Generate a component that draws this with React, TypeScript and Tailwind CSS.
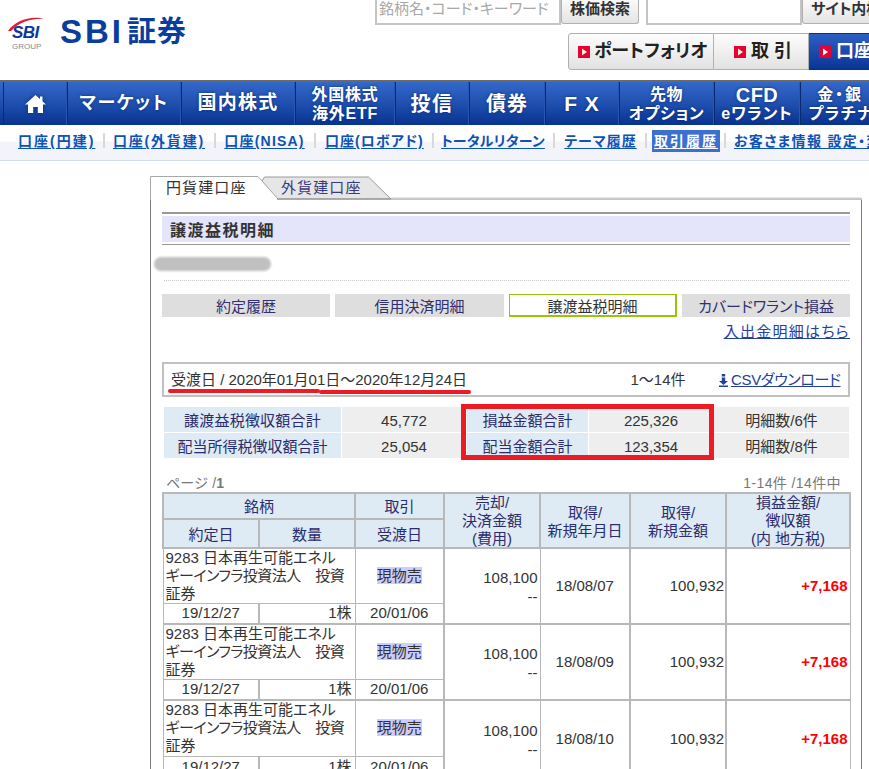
import React from "react";

const font = "[font-family:'Liberation_Sans','Noto_Sans_CJK_JP',sans-serif]";

function Play({ dark }: { dark?: boolean }) {
  return (
    <svg width="12" height="12" viewBox="0 0 12 12" className="shrink-0">
      <rect width="12" height="12" fill="#e60033" />
      <path d="M4 2.5 L9 6 L4 9.5 Z" fill={dark ? "#fff" : "#fff3d0"} />
    </svg>
  );
}

function Logo() {
  return (
    <div className="flex items-start pl-[8px] pt-[16px] h-full">
      <div className="relative w-[40px] h-[36px]">
        <svg width="40" height="22" viewBox="0 0 40 22" className="absolute left-0 top-0">
          <path d="M0 15 C7 4 24 -1 37 3 C26 2 12 5 3 15 Z" fill="#e8192c" />
        </svg>
        <div className="absolute left-[4px] top-[8px] text-[17px] leading-[17px] font-bold italic text-[#0b3a94] tracking-[-0.5px]">SBI</div>
        <div className="absolute left-[4px] top-[26px] text-[8px] leading-[9px] text-[#8a8a8a]">GROUP</div>
      </div>
      <div className="ml-[12px] flex items-center h-[32px] font-bold text-[#0b3d9c] whitespace-nowrap">
        <span className="text-[33px] leading-[32px] tracking-[3px]">SBI</span>
        <span className="ml-[3px] text-[29px] leading-[32px] tracking-[1px]">証券</span>
      </div>
    </div>
  );
}

function HeaderRight() {
  return (
    <div className="flex flex-col w-[494px] shrink-0">
      <div className="flex h-[24px] w-[520px]">
        <div className="w-[186px] shrink-0 h-[25px] border-2 border-t-0 border-[#c4c4c4] bg-white text-[#a8a8a8] text-[15px] leading-[17px] pl-[2px] whitespace-nowrap overflow-hidden">銘柄名・コード・キーワード</div>
        <div className="w-[78px] shrink-0 h-[24px] rounded-b-[3px] border border-t-0 border-[#b0b0b0] bg-gradient-to-b from-[#fafafa] to-[#e4e4e4] text-[15px] leading-[18px] font-bold text-[#333] text-center">株価検索</div>
        <div className="w-[156px] shrink-0 h-[25px] ml-[7px] border-2 border-t-0 border-[#c4c4c4] bg-white" />
        <div className="w-[90px] shrink-0 h-[24px] rounded-b-[3px] border border-t-0 border-[#b0b0b0] bg-gradient-to-b from-[#fafafa] to-[#e4e4e4] text-[15px] leading-[18px] font-bold text-[#333] pl-[8px] whitespace-nowrap">サイト内検索</div>
      </div>
      <div className="flex h-[37px] mt-[9px] ml-[193px] w-[345px]">
        <div className="w-[146px] shrink-0 h-[37px] flex items-center pl-[9px] gap-[4px] rounded-l-[3px] border border-[#b0b0b0] bg-gradient-to-b from-[#fdfdfd] to-[#e2e2e2] text-[18px] font-bold text-[#222] whitespace-nowrap"><Play />ポートフォリオ</div>
        <div className="w-[95px] shrink-0 h-[37px] flex items-center pl-[20px] gap-[5px] border border-l-0 border-[#b0b0b0] bg-gradient-to-b from-[#fdfdfd] to-[#e2e2e2] text-[18px] font-bold text-[#222] whitespace-nowrap"><Play />取 引</div>
        <div className="w-[100px] shrink-0 h-[37px] flex items-center pl-[10px] gap-[5px] border border-l-0 border-[#0a2f86] bg-gradient-to-b from-[#2d5fc4] to-[#0a3596] text-[18px] font-bold text-white whitespace-nowrap"><Play dark />口座管理</div>
      </div>
    </div>
  );
}

const navItems: { w: string; lines: { t: string; c?: string }[]; size: string }[] = [
  { w: "w-[114px]", lines: [{ t: "マーケット" }], size: "text-[18px] tracking-[1.5px]" },
  { w: "w-[114px]", lines: [{ t: "国内株式" }], size: "text-[19px] tracking-[1.2px]" },
  { w: "w-[100px]", lines: [{ t: "外国株式" }, { t: "海外ETF" }], size: "text-[16px] leading-[19px] tracking-[0.8px]" },
  { w: "w-[74px]", lines: [{ t: "投信" }], size: "text-[20px] tracking-[1.5px]" },
  { w: "w-[76px]", lines: [{ t: "債券" }], size: "text-[20px] tracking-[1px]" },
  { w: "w-[74px]", lines: [{ t: "F X" }], size: "text-[21px] tracking-[1px]" },
  { w: "w-[95px]", lines: [{ t: "先物" }, { t: "オプション" }], size: "text-[16px] leading-[19px] tracking-[0.6px]" },
  { w: "w-[86px]", lines: [{ t: "CFD", c: "text-[20px] leading-[20px] tracking-[0.5px]" }, { t: "eワラント" }], size: "text-[16px] leading-[18px] tracking-[1px]" },
  { w: "w-[80px]", lines: [{ t: "金・銀", c: "tracking-[1.8px]" }, { t: "プラチナ", c: "pl-[2px] tracking-[1.5px]" }], size: "text-[16px] leading-[19px] tracking-[0.6px]" },
];

function NavCell({ children, w, size }: { children: React.ReactNode; w: string; size: string }) {
  return (
    <div className={`${w} ${size} shrink-0 h-full flex flex-col items-center justify-center border-l border-l-[#0a2a70] border-r border-r-[#2a55b0] font-bold text-white text-center whitespace-nowrap [text-shadow:0_0_3px_#0a2a70]`}>
      {children}
    </div>
  );
}

function Nav() {
  return (
    <div className="flex h-[45px] w-[869px] overflow-hidden border-t-2 border-t-[#6a6a6a] bg-gradient-to-b from-[#3468c8] via-[#1f50b0] to-[#08328f]">
      <div className="w-[3px] shrink-0" />
      <NavCell w="w-[64px]" size="">
        <svg width="21" height="18" viewBox="0 0 21 18" className="drop-shadow-[0_0_2px_#0a2a70]">
          <path d="M10.5 0 L15 4 L15 1.5 L17.5 1.5 L17.5 6.3 L21 9.5 L18 9.5 L18 18 L12.8 18 L12.8 12 L8.2 12 L8.2 18 L3 18 L3 9.5 L0 9.5 Z" fill="#fff" />
        </svg>
      </NavCell>
      {navItems.map((n) => (
        <NavCell key={n.lines[0].t} w={n.w} size={n.size}>
          {n.lines.map((l) => (
            <div key={l.t} className={l.c}>{l.t}</div>
          ))}
        </NavCell>
      ))}
    </div>
  );
}

const subItems: { label: string; cls: string; active?: boolean }[] = [
  { label: "口座(円建)", cls: "w-[76px] tracking-[2px]" },
  { label: "口座(外貨建)", cls: "w-[91px] tracking-[1.8px]" },
  { label: "口座(NISA)", cls: "w-[81px] tracking-[1.2px]" },
  { label: "口座(ロボアド)", cls: "w-[98px] tracking-[1px]" },
  { label: "トータルリターン", cls: "w-[104px] tracking-[0.2px]" },
  { label: "テーマ履歴", cls: "w-[73px] tracking-[1px]" },
  { label: "取引履歴", cls: "w-[68px] tracking-[2px]", active: true },
  { label: "お客さま情報 設定・変更", cls: "w-[170px] tracking-[1.3px] text-left" },
];

const seps = ["", "ml-[9px] mr-[8px]", "ml-[10px] mr-[8px]", "ml-[9px] mr-[9px]", "ml-[9px] mr-[7px]", "ml-[8px] mr-[9px]", "ml-[8px] mr-[5px]", "ml-[4px] mr-[8px]"];

function SubNav() {
  return (
    <div className="flex items-start h-[36px] pt-[5px] pl-[18px] w-[869px] overflow-hidden border-b border-b-[#cfdcf0] bg-gradient-to-b from-white from-[45%] to-[#f2f4fa] to-[50%]">
      {subItems.map((s, i) => (
        <React.Fragment key={s.label}>
          {i > 0 && <div className={`${seps[i]} w-[2px] h-[15px] mt-[3px] bg-[#d8d8d8] shrink-0`} />}
          <div
            className={`${s.cls} shrink-0 h-[22px] text-[14px] leading-[22px] font-bold whitespace-nowrap text-center underline underline-offset-2 ${
              s.active ? "bg-[#3b6fd0] text-white" : "text-[#0d52b5]"
            }`}
          >
            {s.label}
          </div>
        </React.Fragment>
      ))}
    </div>
  );
}

function TabStrip() {
  return (
    <div className="relative h-[24px] w-[712px]">
      <svg width="712" height="24" viewBox="0 0 712 24" className="absolute left-0 top-0">
        <path d="M114.5 1 L218.5 1 L241 23 L127 23 L112 5 Z" fill="#e6e6e6" stroke="#9a9a9a" />
        <path d="M0.5 24 L0.5 0.5 L108 0.5 L128 23" fill="#fff" stroke="#a8a8a8" />
        <path d="M127 23 L712 23" stroke="#8c8c8c" strokeWidth="1" />
        <path d="M241 22 L711 22" stroke="#cfcfcf" strokeWidth="1" />
      </svg>
      <div className="relative flex h-[23px] text-[15px] leading-[24px]">
        <div className="w-[113px] pl-[16px] text-[#333] tracking-[1.1px]">円貨建口座</div>
        <div className="pl-[18px] text-[#3a3a80] tracking-[1.1px]">外貨建口座</div>
      </div>
    </div>
  );
}

const blue = "h-[25px] bg-[#deeaf4] text-[#2c2c6c] text-center";
const gray = "h-[25px] bg-[#eeeeee] text-[#333] text-center";

function Summary() {
  return (
    <div className="relative ml-[2px] mt-[10px] w-[685px] grid grid-cols-[177px_124px_121px_124px_135px] gap-x-[1px] gap-y-[1px] text-[15px] leading-[27px]">
      <div className={`${blue} tracking-[0.2px]`}>譲渡益税徴収額合計</div>
      <div className={gray}>45,772</div>
      <div className={blue}>損益金額合計</div>
      <div className={gray}>225,326</div>
      <div className={gray}>明細数/6件</div>
      <div className={blue}>配当所得税徴収額合計</div>
      <div className={gray}>25,054</div>
      <div className={blue}>配当金額合計</div>
      <div className={gray}>123,354</div>
      <div className={gray}>明細数/8件</div>
      <div className="absolute left-[297px] top-[-3px] w-[253px] h-[56px] border-[5px] border-[#ed1c24]" />
    </div>
  );
}

const th = "border-2 border-[#b8b8b8] bg-[#deeaf4] text-[#2c2c6c] font-normal text-center p-0 leading-[18px] align-middle";
const td = "border border-[#b8b8b8] text-[#333] p-0 align-middle overflow-hidden";

function TallHead({ lines, nudge }: { lines: string[]; nudge?: boolean }) {
  return (
    <th rowSpan={2} className={th}>
      <div className={`h-[53px] flex flex-col justify-center ${nudge ? "pt-[2px]" : ""}`}>
        {lines.map((l) => (
          <div key={l}>{l}</div>
        ))}
      </div>
    </th>
  );
}

function Row({ date, h, subH, thick }: { date: string; h: string; subH: string; thick?: boolean }) {
  const edge = thick ? "border-t-2" : "";
  return (
    <>
      <tr className={h}>
        <td colSpan={2} className={`${td} ${edge} pl-[2px] leading-[18px] whitespace-nowrap text-[#222]`}>
          9283 日本再生可能エネル
          <br />
          <span className="tracking-[-0.5px]">ギーインフラ投資法人　投資</span>
          <br />
          証券
        </td>
        <td className={`${td} ${edge} text-center border-r-2 leading-[18px]`}>
          <span className="bg-[#ccccff]">現物売</span>
        </td>
        <td rowSpan={2} className={`${td} ${edge} text-right pr-[2px] pt-[2px] leading-[19px]`}>
          108,100
          <br />
          --
        </td>
        <td rowSpan={2} className={`${td} ${edge} text-center border-r-2 leading-[18px]`}>{date}</td>
        <td rowSpan={2} className={`${td} ${edge} text-right pr-[1px] border-r-2 leading-[18px]`}>100,932</td>
        <td rowSpan={2} className={`${td} ${edge} text-right pr-[2px] font-bold text-[#ff0000] leading-[18px]`}>+7,168</td>
      </tr>
      <tr className={subH}>
        <td className={`${td} text-center border-r-2 leading-[16px]`}>19/12/27</td>
        <td className={`${td} text-right pr-[3px] leading-[16px]`}>1株</td>
        <td className={`${td} text-center border-r-2 leading-[16px]`}>20/01/06</td>
      </tr>
    </>
  );
}

function DataTable() {
  return (
    <table className="table-fixed border-collapse w-[687px] text-[15px]">
      <colgroup>
        <col className="w-[96px]" />
        <col className="w-[96px]" />
        <col className="w-[89px]" />
        <col className="w-[96px]" />
        <col className="w-[90px]" />
        <col className="w-[96px]" />
        <col className="w-[124px]" />
      </colgroup>
      <thead>
        <tr className="h-[26px]">
          <th colSpan={2} className={`${th} pt-[1px]`}>銘柄</th>
          <th className={`${th} pt-[1px]`}>取引</th>
          <TallHead lines={["売却/", "決済金額", "(費用)"]} />
          <TallHead lines={["取得/", "新規年月日"]} nudge />
          <TallHead lines={["取得/", "新規金額"]} nudge />
          <TallHead lines={["損益金額/", "徴収額", "(内 地方税)"]} />
        </tr>
        <tr className="h-[28px]">
          <th className={`${th} pt-[2px]`}>約定日</th>
          <th className={`${th} pt-[2px]`}>数量</th>
          <th className={`${th} pt-[2px]`}>受渡日</th>
        </tr>
      </thead>
      <tbody>
        <Row date="18/08/07" h="h-[55px]" subH="h-[20px]" />
        <Row date="18/08/09" h="h-[55px]" subH="h-[21px]" thick />
        <Row date="18/08/10" h="h-[56px]" subH="h-[21px]" thick />
      </tbody>
    </table>
  );
}

export default function App() {
  return (
    <div className={`${font} relative w-[869px] h-[769px] overflow-hidden bg-white [font-feature-settings:'palt']`}>
      <div className="flex h-[80px] w-[869px] overflow-hidden">
        <div className="w-[375px] shrink-0">
          <Logo />
        </div>
        <HeaderRight />
      </div>
      <Nav />
      <SubNav />
      <div className="ml-[150px] mt-[15px] w-[712px]">
        <TabStrip />
        <div className="border-x border-[#808080] px-[11px] pt-[12px] h-[600px]">
          <div className="border-t-2 border-[#999999] pt-[2px]">
            <div className="h-[26px] bg-[#e4e4fb] pl-[8px] text-[16px] leading-[29px] font-bold text-[#333] tracking-[1.5px]">譲渡益税明細</div>
            <div className="mt-[2px] border-t border-[#999999]" />
          </div>
          <div className="-ml-[8px] mt-[12px] w-[117px] h-[14px] rounded-full bg-[#c0c0c0] blur-[1px]" />
          <div className="mt-[9px] ml-[2px] mr-[1px] border-t border-dotted border-[#cccccc]" />
          <div className="mt-[13px] flex gap-[5px] text-[15px] leading-[26px] text-center">
            <div className="w-[168px] h-[23px] bg-[#dedede] text-[#2f2f70]">約定履歴</div>
            <div className="w-[169px] h-[23px] bg-[#dedede] text-[#2f2f70]">信用決済明細</div>
            <div className="w-[168px] h-[23px] bg-white border border-[#9ac40c] border-r-2 border-b-2 text-[#333] leading-[24px]">譲渡益税明細</div>
            <div className="w-[168px] h-[23px] bg-[#dedede] text-[#2f2f70]">カバードワラント損益</div>
          </div>
          <div className="mt-[6px] text-right text-[15px] leading-[18px] text-[#22409f] underline tracking-[1.25px]">入出金明細はちら</div>
          <div className="relative mt-[21px] h-[35px] border-2 border-[#c0c0c0] flex items-center text-[15px] leading-[20px] pt-[1px] text-[#333]">
            <div className="w-[458px] pl-[7px]">受渡日 / 2020年01月01日～2020年12月24日</div>
            <div className="w-[72px] text-center whitespace-nowrap">1～14件</div>
            <div className="ml-[25px] flex items-center text-[#22409f] underline whitespace-nowrap tracking-[-0.35px]">
              <svg width="9" height="13" viewBox="0 0 9 13" className="mr-[3px]">
                <rect x="2.8" y="0" width="3.4" height="2.5" fill="#22409f" />
                <path d="M2.8 3.5 H6.2 V7 H9 L4.5 11 L0 7 H2.8 Z" fill="#22409f" />
                <rect x="0" y="11.5" width="9" height="1.5" fill="#22409f" />
              </svg>
              CSVダウンロード
            </div>
            <div className="absolute left-[4px] top-[25px] w-[152px] h-[4px] rounded-full bg-[#ed1c24]" />
            <div className="absolute left-[155px] top-[26px] w-[152px] h-[4px] rounded-full bg-[#ed1c24]" />
          </div>
          <Summary />
          <div className="mt-[17px] flex justify-between items-center h-[17px] text-[14px] leading-[19px] text-[#777] pl-[4px] pr-[9px]">
            <div className="tracking-[0.2px]">ページ /<span className="font-bold">1</span></div>
            <div className="tracking-[0.4px]">1-14件 /14件中</div>
          </div>
          <DataTable />
        </div>
      </div>
    </div>
  );
}
